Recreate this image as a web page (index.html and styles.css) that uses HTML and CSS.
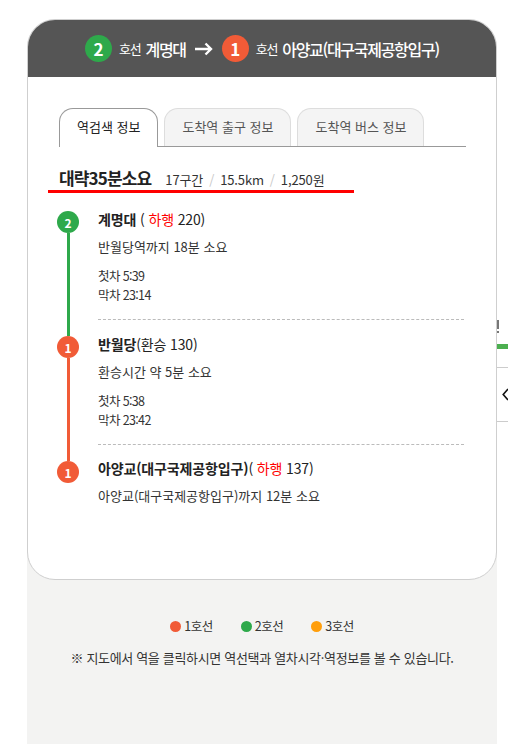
FILE: index.html
```html
<!DOCTYPE html>
<html lang="ko">
<head>
<meta charset="utf-8">
<title>경로 안내</title>
<link rel="stylesheet" href="styles.css">
</head>
<body>
<div class="page">
  <div class="gutter"></div>
  <div class="main">
    <div class="card">
      <div class="head">
        <span class="hdot l2">2</span>
        <span class="hs">호선</span>
        <span class="st">계명대</span>
        <svg class="arrow" width="19" height="14" viewBox="0 0 19 14"><path d="M1 7H17M11.5 1.5L17 7L11.5 12.5" fill="none" stroke="#fff" stroke-width="2.4"/></svg>
        <span class="hdot l1">1</span>
        <span class="hs">호선</span>
        <span class="st">아양교(대구국제공항입구)</span>
      </div>
      <div class="body">
        <div class="tabs">
          <div class="tab active">역검색 정보</div>
          <div class="tab">도착역 출구 정보</div>
          <div class="tab">도착역 버스 정보</div>
        </div>
        <div class="summary">
          <span class="sum-time">대략35분소요</span>
          <span class="sum-meta">17구간<span class="sep">/</span>15.5km<span class="sep">/</span>1,250원</span>
        </div>
        <div class="timeline">
          <div class="step">
            <div class="rail first">
              <span class="dot l2">2</span>
              <span class="seg fill g"></span>
            </div>
            <div class="step-body">
              <div class="name"><b>계명대</b> ( <em>하행</em> 220)</div>
              <div class="desc">반월당역까지 18분 소요</div>
              <div class="times">첫차 5:39<br>막차 23:14</div>
            </div>
          </div>
          <div class="step">
            <div class="rail">
              <span class="seg top g"></span>
              <span class="dot l1">1</span>
              <span class="seg fill o"></span>
            </div>
            <div class="step-body">
              <div class="name"><b>반월당</b>(환승 130)</div>
              <div class="desc">환승시간 약 5분 소요</div>
              <div class="times">첫차 5:38<br>막차 23:42</div>
            </div>
          </div>
          <div class="step last">
            <div class="rail">
              <span class="seg top o"></span>
              <span class="dot l1">1</span>
            </div>
            <div class="step-body">
              <div class="name"><b>아양교(대구국제공항입구)</b>( <em>하행</em> 137)</div>
              <div class="desc">아양교(대구국제공항입구)까지 12분 소요</div>
            </div>
          </div>
        </div>
      </div>
    </div>
    <div class="legend">
      <span class="lg"><i class="c1"></i>1호선</span>
      <span class="lg"><i class="c2"></i>2호선</span>
      <span class="lg"><i class="c3"></i>3호선</span>
    </div>
    <p class="note">※ 지도에서 역을 클릭하시면 역선택과 열차시각·역정보를 볼 수 있습니다.</p>
  </div>
  <div class="side">
    <div class="bang"></div>
    <div class="greenbar"></div>
    <div class="side-row">
      <svg width="7" height="13" viewBox="0 0 7 13"><path d="M6 1L1.2 6.5L6 12" fill="none" stroke="#111" stroke-width="1.6"/></svg>
    </div>
  </div>
</div>
</body>
</html>
```

FILE: styles.css
```css
* { box-sizing: border-box; }

body {
  margin: 0;
  background: #fff;
  color: #333;
  font-family: "Noto Sans CJK KR", "Noto Sans", sans-serif;
}

.page {
  display: flex;
  min-height: 744px;
}

.gutter {
  width: 27px;
  flex: none;
}

.main {
  width: 470px;
  flex: none;
  padding-top: 19px;
  background: linear-gradient(#fff 0, #fff 80px, #f3f3f2 80px);
}

.card {
  background: #fff;
  border: 1px solid #cfcfcf;
  border-radius: 28px;
  overflow: hidden;
}

/* header */
.head {
  height: 57px;
  background: #555;
  color: #fff;
  display: flex;
  align-items: center;
  justify-content: center;
  letter-spacing: -0.08em;
}

.hdot {
  width: 27px;
  height: 27px;
  border-radius: 50%;
  display: flex;
  align-items: center;
  justify-content: center;
  font-size: 17px;
  font-weight: 700;
  letter-spacing: 0;
}

.l1 { background: #f15b37; }
.l2 { background: #2ea94b; }

.hs {
  font-size: 13px;
  margin: 0 5px 0 7px;
}

.st {
  font-size: 16px;
  font-weight: 500;
}

.arrow {
  margin: 0 9px 0 8px;
}

/* body */
.body {
  padding: 31px 30px 73px 31px;
}

.tabs {
  display: flex;
  align-items: flex-end;
  gap: 6px;
  height: 39px;
  border-bottom: 1px solid #999;
}

.tab {
  height: 38px;
  padding: 0 17px;
  border: 1px solid #ddd;
  border-bottom: none;
  border-radius: 14px 14px 0 0;
  background: #f4f4f4;
  color: #555;
  font-size: 13px;
  line-height: 36px;
}

.tab.active {
  height: 39px;
  margin-bottom: -1px;
  border-color: #999;
  background: #fff;
  color: #222;
}

.summary {
  display: flex;
  align-items: baseline;
  margin: 19px 0 0 -11px;
  padding-left: 11px;
  width: 306px;
  height: 27px;
  border-bottom: 3px solid #f00;
}

.sum-time {
  font-size: 17px;
  font-weight: 700;
  color: #222;
  letter-spacing: -0.05em;
  line-height: 24px;
  margin-right: 14px;
}

.sum-meta {
  font-size: 13px;
  color: #333;
  letter-spacing: -0.01em;
}

.sep {
  color: #c8c8c8;
  margin: 0 6px;
}

/* timeline */
.timeline {
  margin: 16px 0 0 -2px;
}

.step {
  display: flex;
}

.rail {
  width: 41px;
  flex: none;
  display: flex;
  flex-direction: column;
  align-items: flex-start;
}

.rail.first {
  padding-top: 2px;
}

.dot {
  width: 22px;
  height: 22px;
  border-radius: 50%;
  color: #fff;
  font-size: 12px;
  font-weight: 700;
  display: flex;
  align-items: center;
  justify-content: center;
  flex: none;
}

.seg {
  width: 3px;
  margin-left: 9.5px;
}

.seg.top { height: 16px; flex: none; }
.seg.fill { flex: 1; }
.seg.g { background: #2ea94b; }
.seg.o { background: #f15b37; }

.step-body {
  flex: 1;
  margin-right: 2px;
  padding-bottom: 15px;
  border-bottom: 1px dashed #bbb;
}

.step + .step .step-body {
  padding-top: 14px;
}

.step.last .step-body {
  padding-top: 13px;
  padding-bottom: 0;
  border-bottom: none;
}

.name {
  font-size: 14px;
  line-height: 20px;
  color: #222;
  letter-spacing: -0.01em;
}

.name b { font-weight: 700; }
.name em { font-style: normal; color: #f00; }

.desc {
  margin-top: 8px;
  font-size: 13px;
  line-height: 20px;
  color: #333;
}

.times {
  margin-top: 9px;
  font-size: 12.5px;
  line-height: 19px;
  color: #333;
  letter-spacing: -0.05em;
}

/* legend */
.legend {
  display: flex;
  justify-content: center;
  gap: 28px;
  margin-top: 37px;
  font-size: 12.5px;
  line-height: 18px;
  color: #333;
  letter-spacing: -0.04em;
}

.lg {
  display: flex;
  align-items: center;
}

.lg i {
  width: 11px;
  height: 11px;
  border-radius: 50%;
  margin-right: 3px;
}

.c1 { background: #f15b37; }
.c2 { background: #2ea94b; }
.c3 { background: #ff9e0b; }

.note {
  margin: 14px 0 0;
  text-align: center;
  font-size: 13px;
  line-height: 18px;
  color: #333;
  letter-spacing: -0.025em;
}

/* clipped side panel */
.side {
  flex: 1;
  background: #fff;
  padding-top: 320px;
}

.bang {
  width: 2px;
  height: 13px;
  background: linear-gradient(#777 0, #777 9px, transparent 9px, transparent 11px, #777 11px);
}

.greenbar {
  margin-top: 11px;
  height: 5px;
  background: #4caf50;
}

.side-row {
  margin-top: 18px;
  height: 55px;
  border-top: 1px solid #ccc;
  border-bottom: 1px solid #ccc;
  display: flex;
  align-items: center;
  padding-left: 5px;
}
```
